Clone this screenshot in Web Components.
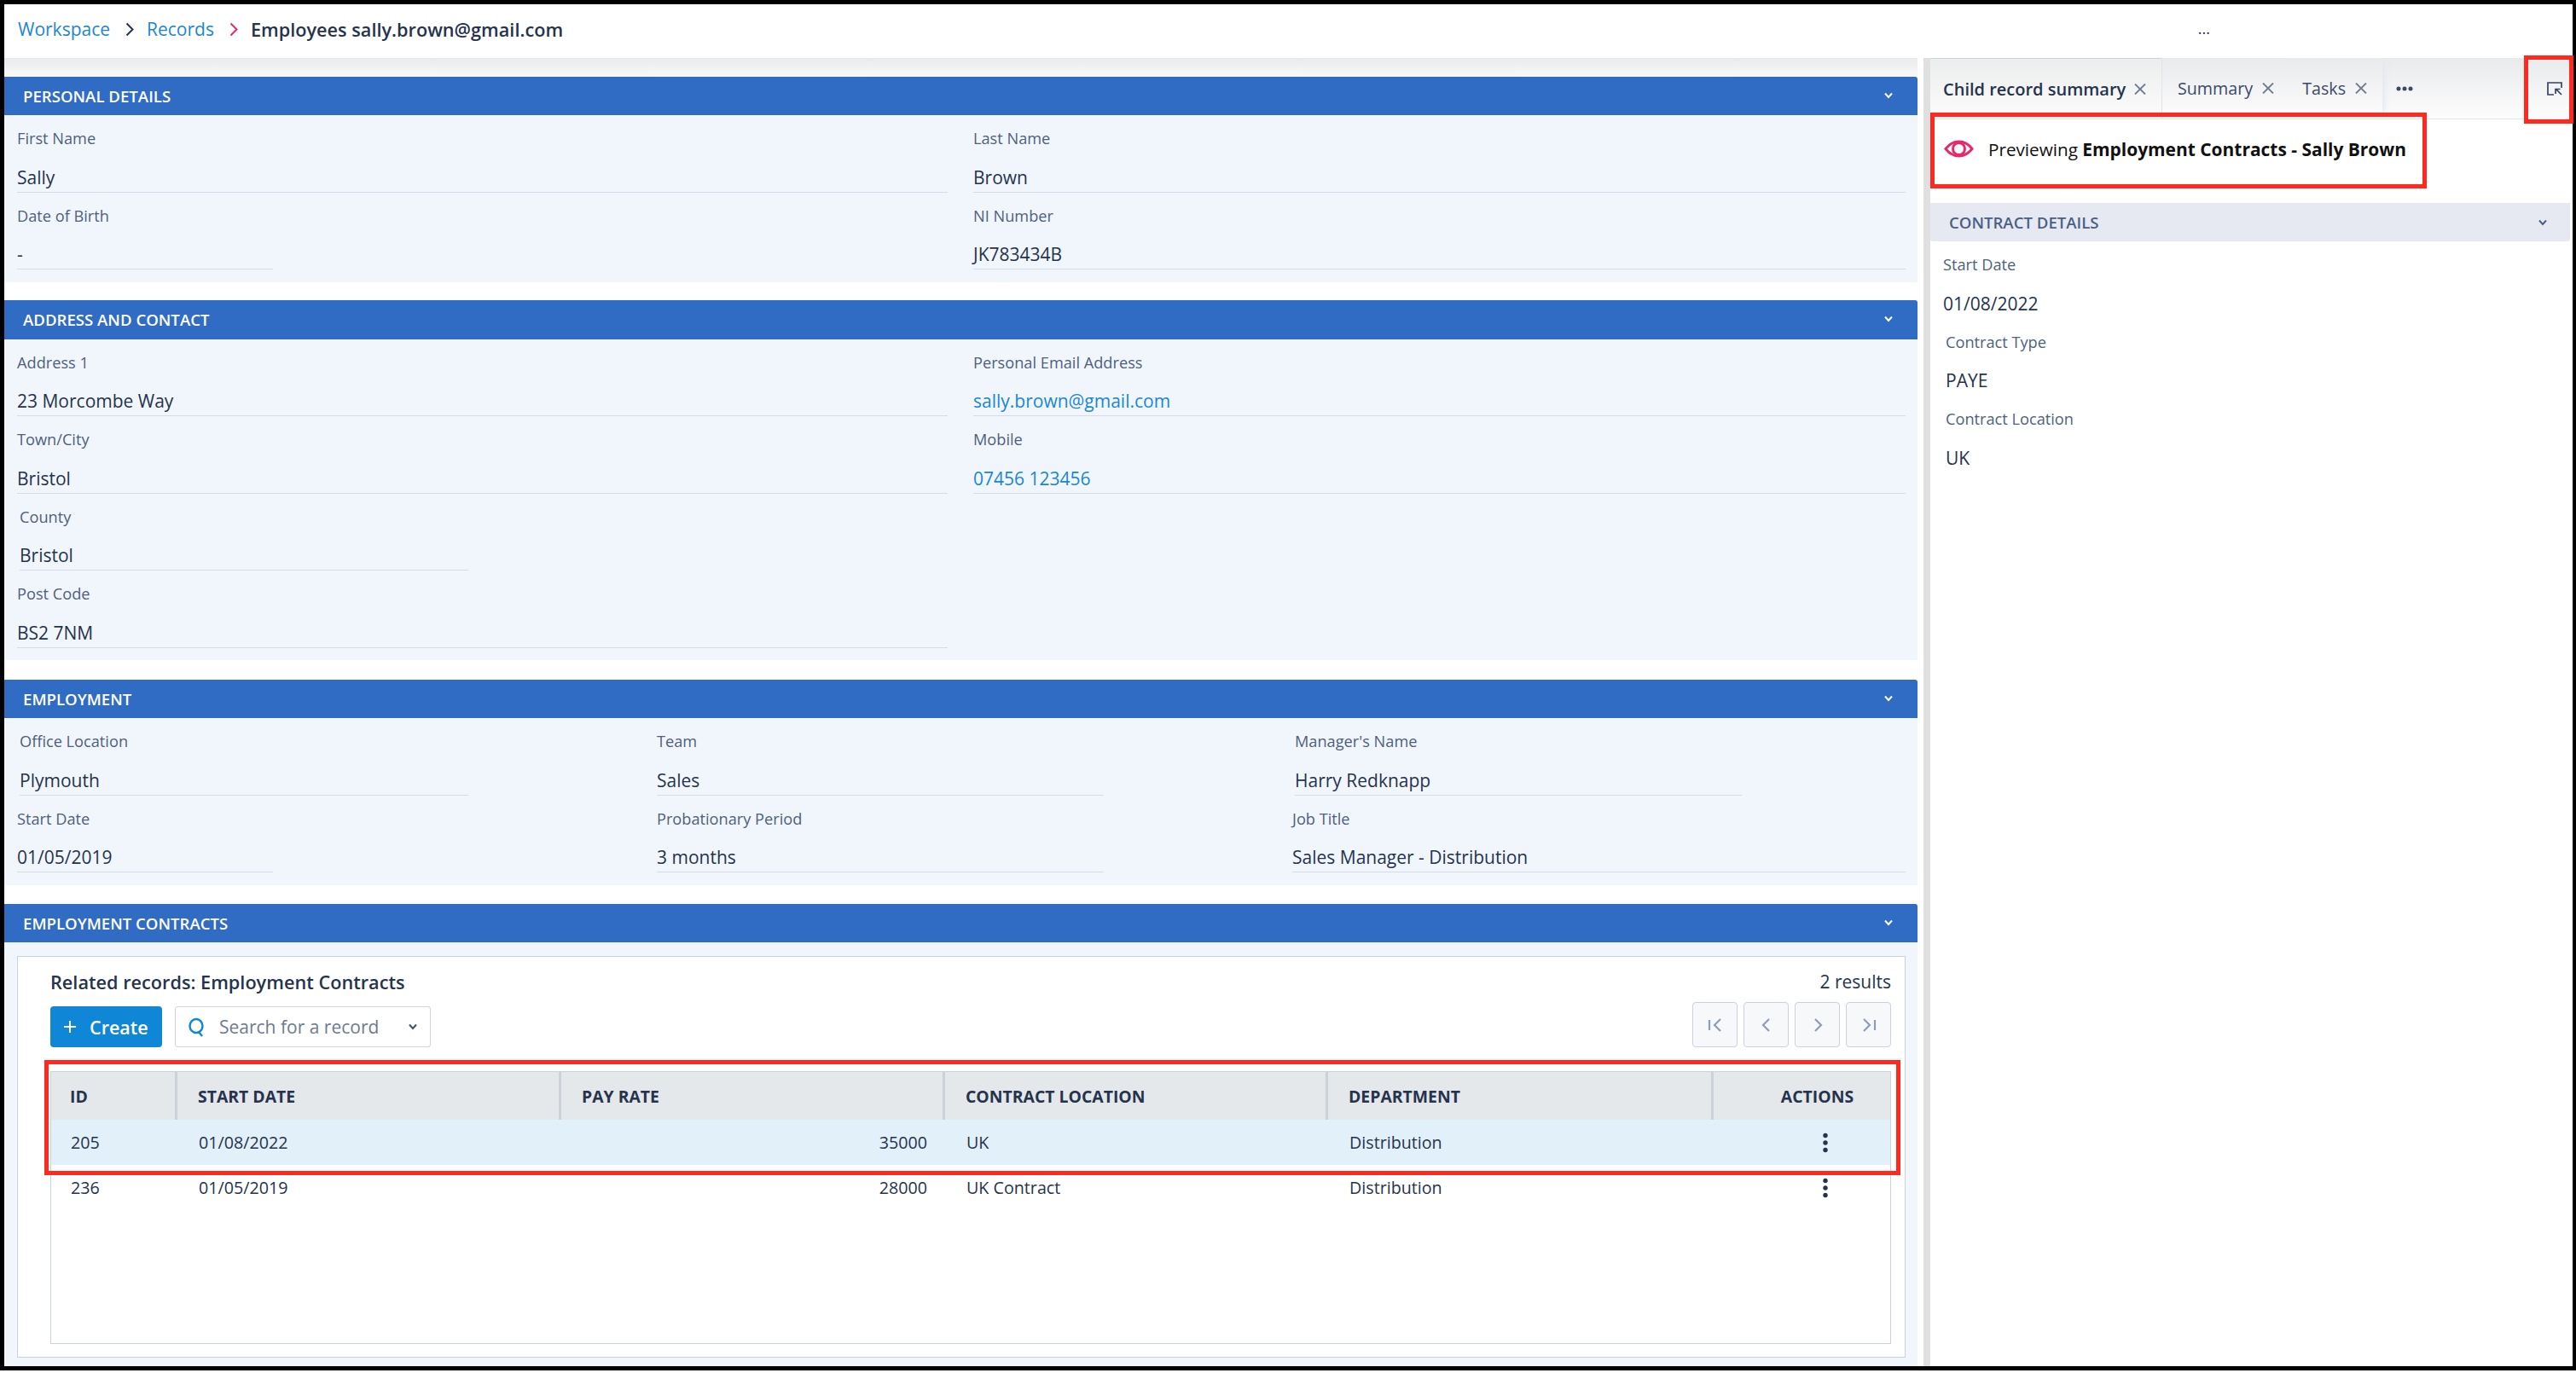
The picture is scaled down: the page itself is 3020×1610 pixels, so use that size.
<!DOCTYPE html>
<html lang="en"><head><meta charset="utf-8"><title>Employees</title>
<style>
html,body{margin:0;padding:0;background:#fff}
body{font-family:"Open Sans",sans-serif;color:#26334d;width:3020px;height:1610px;overflow:hidden}
</style></head><body>
<app-frame>
  <bread-crumbs slot="header"></bread-crumbs>
  <record-section slot="left" title="PERSONAL DETAILS" style="margin-bottom:21px" h="45">
    <field-grid cols="1091px 1fr">
      <record-field label="First Name" value="Sally"></record-field>
      <record-field label="Last Name" value="Brown"></record-field>
      <record-field label="Date of Birth" value="-" style="--w:300px"></record-field>
      <record-field label="NI Number" value="JK783434B"></record-field>
    </field-grid>
  </record-section>
  <record-section slot="left" title="ADDRESS AND CONTACT" style="margin-bottom:23px" h="46">
    <field-grid cols="1091px 1fr">
      <record-field label="Address 1" value="23 Morcombe Way"></record-field>
      <record-field label="Personal Email Address" value="sally.brown@gmail.com" link></record-field>
      <record-field label="Town/City" value="Bristol"></record-field>
      <record-field label="Mobile" value="07456 123456" link></record-field>
      <record-field label="County" value="Bristol" style="--w:526px;--ml:3px"></record-field>
      <span></span>
      <record-field label="Post Code" value="BS2 7NM"></record-field>
    </field-grid>
  </record-section>
  <record-section slot="left" title="EMPLOYMENT" style="margin-bottom:22.500px" h="45">
    <field-grid cols="720px 715px 1fr">
      <record-field label="Office Location" value="Plymouth" style="--w:526px;--ml:3px"></record-field>
      <record-field label="Team" value="Sales" style="--w:524px"></record-field>
      <record-field label="Manager's Name" value="Harry Redknapp" style="--w:524px;--ml:3px"></record-field>
      <record-field label="Start Date" value="01/05/2019" style="--w:300px"></record-field>
      <record-field label="Probationary Period" value="3 months" style="--w:524px"></record-field>
      <record-field label="Job Title" value="Sales Manager - Distribution"></record-field>
    </field-grid>
  </record-section>
  <record-section slot="left" title="EMPLOYMENT CONTRACTS" h="45" flush>
    <related-card></related-card>
  </record-section>

  <preview-tabs slot="right"></preview-tabs>
  <preview-note slot="right"></preview-note>
  <detail-panel slot="right"></detail-panel>
</app-frame>

<script>
const CHEV='<svg width="12" height="10" viewBox="0 0 12 10" fill="none" stroke="currentColor" stroke-width="2"><path d="M2 2.5 6 7l4-4.500"/></svg>';
class Base extends HTMLElement{
  render(html){ if(!this.shadowRoot) this.attachShadow({mode:'open'}); this.shadowRoot.innerHTML=html; }
}
customElements.define('app-frame',class extends Base{connectedCallback(){this.render(`<style>
:host{display:block;position:relative;width:3020px;height:1610px;box-sizing:border-box;overflow:hidden}
.wrap{display:flex;flex-direction:column;height:1602px;box-sizing:border-box;padding:5px 4px 0 5px}
header{height:63px;flex:none;display:flex;align-items:center;padding-bottom:5px;box-sizing:border-box}
main{flex:1;display:flex;min-height:0}
.left{width:2243px;flex:none;padding-top:22px;box-sizing:border-box;display:flex;flex-direction:column;
 background:linear-gradient(#e9eaec,#f9f9fa) top/100% 22px no-repeat}
.split{width:8px;flex:none;margin-left:7px;background:#e0e0e0}
.right{flex:1;min-width:0;display:flex;flex-direction:column}
.frame{position:absolute;left:0;top:0;width:3011px;height:1597px;border:solid #000;border-width:5px 4px 5px 5px;pointer-events:none}
.red{position:absolute;box-sizing:border-box;border:5px solid #ff2a1f;pointer-events:none}
</style>
<div class="wrap"><header><slot name="header"></slot></header>
<main><div class="left"><slot name="left"></slot></div><div class="split"></div><div class="right"><slot name="right"></slot></div></main></div>
<div class="frame"></div>
<div class="red" style="left:2263px;top:132px;width:582px;height:89px"></div>
<div class="red" style="left:2959px;top:65px;width:58px;height:80px"></div>
<div class="red" style="left:52px;top:1243px;width:2176px;height:135px"></div>`)}});

customElements.define('bread-crumbs',class extends Base{connectedCallback(){this.render(`<style>
:host{display:flex;align-items:center;width:100%;height:100%;padding-left:16px;box-sizing:border-box;font-size:21px}
a{color:#1a87d4;text-decoration:none}
svg{flex:none;margin:0 15px 0 18px;display:block}
b{font-weight:600;color:#26334d;font-size:21.700px}
.dots{margin-left:auto;margin-right:425px;font-size:18px;color:#26334d;position:relative;top:-1px}
</style><a>Workspace</a><svg width="10" height="17" viewBox="0 0 10 17" fill="none" stroke="#26334d" stroke-width="2"><path d="m1.500 1.500 7 7-7 7"/></svg><a>Records</a><svg width="10" height="17" viewBox="0 0 10 17" fill="none" stroke="#e8296b" stroke-width="2"><path d="m1.500 1.500 7 7-7 7"/></svg><b>Employees sally.brown@gmail.com</b><span class="dots">...</span>`)}});

customElements.define('record-section',class extends Base{connectedCallback(){
 const h=this.getAttribute('h')||45, flush=this.hasAttribute('flush');
 this.render(`<style>
:host{display:flex;flex-direction:column;flex:none;${flush?'flex:1;min-height:0;':''}background:#f1f6fd}
.hd{height:${h}px;flex:none;background:#306cc4;color:#fff;display:flex;align-items:center;justify-content:space-between;padding:0 28px 1px 22px;box-sizing:border-box;border-radius:0 3px 0 0;font-size:18.600px;font-weight:600}
svg{display:block}
.bd{flex:1;min-height:0;padding:0 14px ${flush?0:14.5}px 15px;display:flex;flex-direction:column}
</style><div class="hd"><span>${this.getAttribute('title')}</span>${CHEV}</div><div class="bd"><slot></slot></div>`)}});

customElements.define('field-grid',class extends Base{connectedCallback(){this.render(`<style>
:host{display:grid;grid-template-columns:${this.getAttribute('cols')};column-gap:30px}
</style><slot></slot>`)}});

customElements.define('record-field',class extends Base{connectedCallback(){
 const link=this.hasAttribute('link');
 this.render(`<style>
:host{display:block;box-sizing:border-box;height:90.500px;padding-top:15px;width:var(--w,auto);margin-left:var(--ml,0);border-bottom:1.500px solid #d5dbe8;font-size:18.200px}
.l{height:24px;line-height:24px;color:#4f5f7e}
.v{margin-top:18.500px;height:30px;line-height:30px;font-size:21px;color:${link?'#1a87d4':'#26334d'}}
</style><div class="l">${this.getAttribute('label')}</div><div class="v">${this.getAttribute('value')}</div>`)}});

customElements.define('related-card',class extends Base{connectedCallback(){
 const pg=(d)=>`<button><svg width="22" height="22" viewBox="0 0 22 22" fill="none" stroke="#8e9cb8" stroke-width="2.200">${d}</svg></button>`;
 this.render(`<style>
:host{display:flex;flex-direction:column;flex:none;box-sizing:border-box;margin-top:16px;height:471px;border:1.500px solid #c9d2e3;background:#fff;padding:0 16px 15px 38px}
.top{display:flex;justify-content:space-between;align-items:flex-start;height:56px;line-height:59px;flex:none;font-size:21px}
.top b{font-weight:600;font-size:21.700px}
.tools{display:flex;align-items:flex-start;height:53px;flex:none;gap:15px}
.create{box-sizing:border-box;height:48px;margin-top:2px;width:131px;background:#0f86d6;color:#fff;border-radius:4px;display:flex;align-items:center;padding-left:16px;font-size:21.500px;font-weight:600;gap:16px}
.search{box-sizing:border-box;height:48px;margin-top:2px;width:300px;border:1.500px solid #d0d4dc;border-radius:3px;display:flex;align-items:center;padding-left:15px;color:#6f7a8e;font-size:21px}
.search span{margin-left:16px;flex:1}
.search svg:last-child{margin-right:14px;color:#3c4f76}
.pager{margin-left:auto;display:flex;gap:7px;margin-top:-3px}
button{box-sizing:border-box;width:53px;height:53px;padding:0;background:#f6f8fa;border:1.500px solid #c9d2e3;border-radius:4px;display:flex;align-items:center;justify-content:center}
data-table{margin-top:25px}
</style>
<div class="top"><b>Related records: Employment Contracts</b><span>2 results</span></div>
<div class="tools"><div class="create"><svg width="14" height="14" viewBox="0 0 14 14" stroke="#fff" stroke-width="2"><path d="M7 0v14M0 7h14"/></svg>Create</div>
<div class="search"><svg width="20" height="24" viewBox="0 0 20 24" fill="none" stroke="#0f86d6" stroke-width="2.400"><ellipse cx="9" cy="11" rx="7.500" ry="8"/><path d="m12 18 4 5"/></svg><span>Search for a record</span>${CHEV}</div>
<div class="pager">${pg('<path d="M4 5v12M17 4l-7 7 7 7"/>')}${pg('<path d="m14 4-7 7 7 7"/>')}${pg('<path d="m8 4 7 7-7 7"/>')}${pg('<path d="m5 4 7 7-7 7M18 5v12"/>')}</div></div>
<data-table></data-table>`)}});

customElements.define('data-table',class extends Base{connectedCallback(){
 const kebab='<svg width="8" height="24" viewBox="0 0 8 24" fill="#26334d"><circle cx="4" cy="3.500" r="2.700"/><circle cx="4" cy="12" r="2.700"/><circle cx="4" cy="20.500" r="2.700"/></svg>';
 const row=(c,a,d,e,f)=>`<div class="row ${c}"><span class="id">${a}</span><span>${d}</span><span class="num">${e}</span><span>${f[0]}</span><span>${f[1]}</span><span class="act">${kebab}</span></div>`;
 this.render(`<style>
:host{display:flex;flex-direction:column;flex:1;min-height:0;box-sizing:border-box;border:1.500px solid #c9d2e3;font-size:19.700px}
.row,.head{display:grid;grid-template-columns:148px 450px 450px 449px 452px 1fr}
.head{height:56px;background:#e5e8eb;font-weight:700;font-size:19.400px}
.head span{display:flex;align-items:center;border-right:3px solid #cdd2d8;padding-left:24px}
.head span:first-child{padding-left:22px}
.head span:last-child{border:0;padding:0 0 0 36px;justify-content:center}
.row{height:53px;align-items:center}
.row.sel{background:#e2f0fa}
.row span{padding-left:25px}
.row .id{padding-left:23px}
.row .num{padding:0 21px 0 0;text-align:right}
.row .act{padding:0 0 0 127px;display:flex}
svg{display:block}
</style><div class="head"><span>ID</span><span>START DATE</span><span>PAY RATE</span><span>CONTRACT LOCATION</span><span>DEPARTMENT</span><span>ACTIONS</span></div>
${row('sel','205','01/08/2022','35000',['UK','Distribution'])}${row('','236','01/05/2019','28000',['UK Contract','Distribution'])}`)}});

customElements.define('preview-tabs',class extends Base{connectedCallback(){
 const x='<svg class="x" width="14" height="13" viewBox="0 0 14 13" fill="none" stroke="#6f7a8e" stroke-width="1.800"><path d="m1 .5 12 12M13 .5l-12 12"/></svg>';
 this.render(`<style>
:host{display:flex;height:72px;flex:none;box-sizing:border-box;border-bottom:1.500px solid #e3e6ea;background:linear-gradient(#e9eaec,#fbfbfc 90%);font-size:19.700px;color:#3c4a66}
.tab{display:flex;align-items:center;box-sizing:border-box}
.a{width:272px;padding-left:15px;gap:10px;font-weight:600;font-size:20px;color:#26334d;background:linear-gradient(#eceded,#fcfcfd);border-top:1.500px solid #c9d2e0;border-right:1.500px solid #dfe3ea}
.s{padding-left:18px;gap:11px}
.t{padding-left:33px;gap:11px;padding-right:18px;box-shadow:8px 0 8px -6px #dfe6f2}
.dots{margin-left:16px;display:flex;align-items:center}
.pop{margin-left:auto;margin-right:12px;display:flex;align-items:center}
svg{display:block}
</style><div class="tab a">Child record summary${x}</div><div class="tab s">Summary${x}</div><div class="tab t">Tasks${x}</div>
<div class="dots"><svg width="20" height="6" viewBox="0 0 20 6" fill="#3c4a66"><circle cx="3" cy="3" r="2.500"/><circle cx="10" cy="3" r="2.500"/><circle cx="17" cy="3" r="2.500"/></svg></div>
<div class="pop"><svg width="18" height="16" viewBox="0 0 18 16" fill="none" stroke="#35435f" stroke-width="1.700"><path d="M17 7V1H1v14h7"/><path d="m17 15-6-6M10 14V8.500h5.500"/></svg></div>`)}});

customElements.define('preview-note',class extends Base{connectedCallback(){this.render(`<style>
:host{display:flex;align-items:center;height:98px;flex:none;box-sizing:border-box;padding:0 0 29px 16px;font-size:20.700px;color:#111;gap:17px}
b{font-weight:700;font-size:20.950px}
</style><svg width="35" height="21" viewBox="0 0 35 21" fill="none" stroke="#e8296b" stroke-width="3"><path d="M2 10.500C7 4 12 2 17.500 2S28 4 33 10.500C28 17 23 19 17.500 19S7 17 2 10.500Z"/><circle cx="17.500" cy="10.500" r="7"/></svg><span>Previewing <b>Employment Contracts - Sally Brown</b></span>`)}});

customElements.define('detail-panel',class extends Base{connectedCallback(){
 const f=(l,v,ml)=>`<div class="f" style="margin-left:${ml}px"><div class="l">${l}</div><div class="v">${v}</div></div>`;
 this.render(`<style>
:host{display:block;font-size:18.200px}
.hd{height:45px;width:750px;background:#e6e9f2;display:flex;align-items:center;justify-content:space-between;padding:0 26px 0 22px;box-sizing:border-box;color:#4a5f85;font-weight:600;font-size:18.600px;border-radius:0 0 3px 3px}
.hd svg{display:block}
.f{height:90.500px;padding-top:15px;box-sizing:border-box}
.l{height:24px;line-height:24px;color:#4f5f7e}
.v{margin-top:18.500px;height:30px;line-height:30px;font-size:21px;color:#26334d}
</style><div class="hd"><span>CONTRACT DETAILS</span>${CHEV}</div>
${f('Start Date','01/08/2022',15)}${f('Contract Type','PAYE',18)}${f('Contract Location','UK',18)}`)}});
</script>
</body></html>
